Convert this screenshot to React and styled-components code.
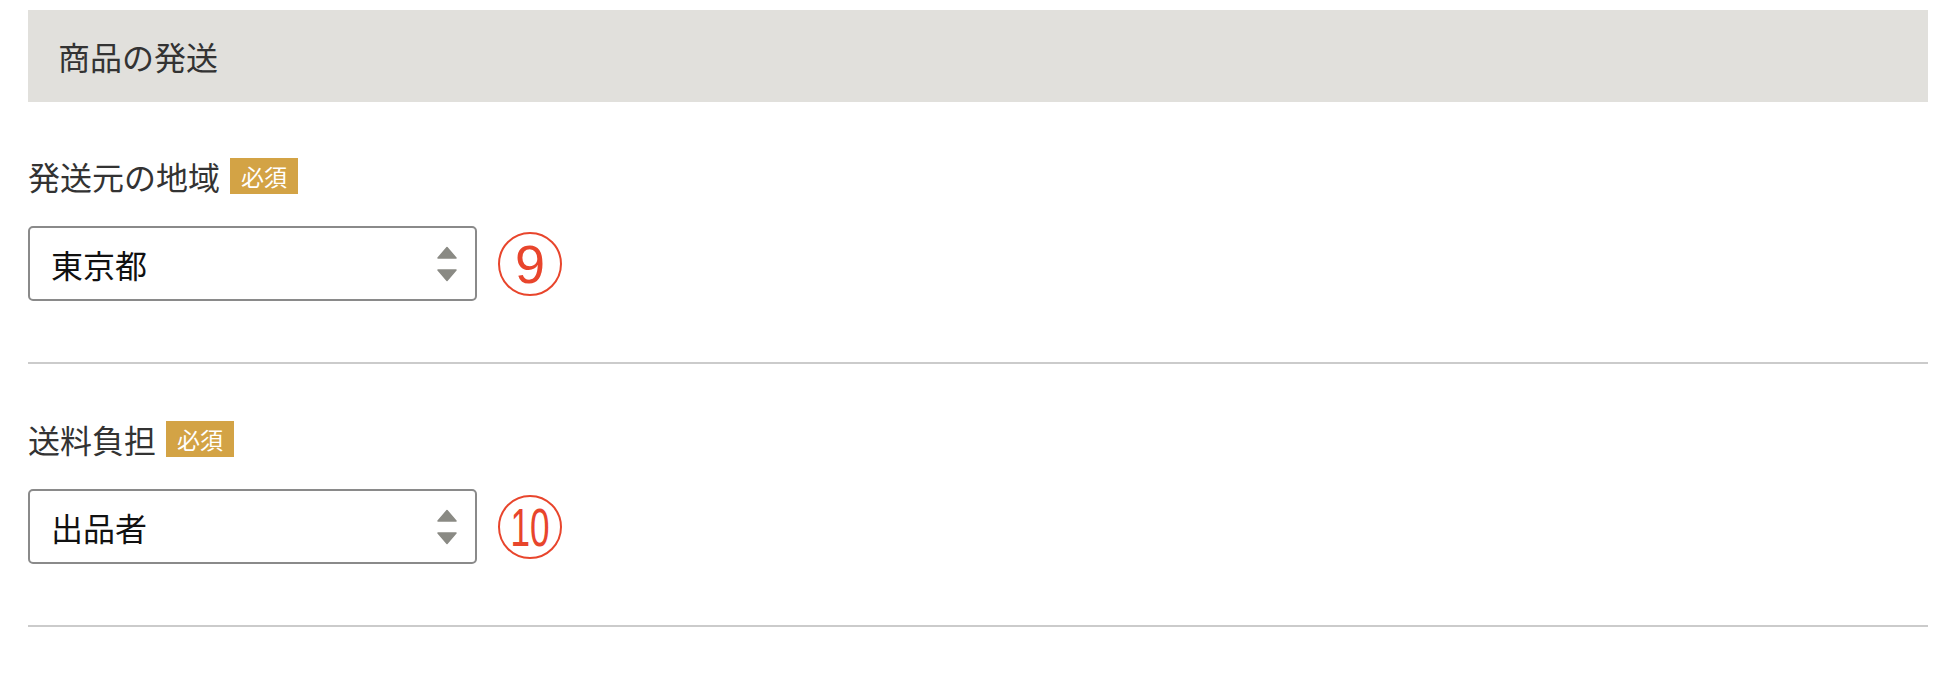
import styled, { createGlobalStyle } from "styled-components";

const GlobalStyle = createGlobalStyle`
  body {
    margin: 0;
    background: #fff;
    font-family: "Noto Sans CJK JP", "Noto Sans", sans-serif;
  }
`;

const Page = styled.div`
  padding: 10px 26px 0 28px;
`;

const SectionHead = styled.h2`
  height: 92px;
  margin: 0;
  padding-left: 30px;
  display: flex;
  align-items: center;
  background-color: #e1e0dc;
  color: #333;
  font-size: 32px;
  font-weight: 400;
`;

const Field = styled.div`
  padding: 51px 0 61px;
  border-bottom: 2px solid #cbcbcb;

  &:first-of-type {
    padding-top: 50px;
  }
`;

const LabelRow = styled.div`
  display: flex;
  align-items: center;
  height: 48px;
  margin-bottom: 26px;
`;

const Label = styled.label`
  color: #333;
  font-size: 32px;
  line-height: 48px;
`;

const Badge = styled.span`
  display: inline-flex;
  align-items: center;
  height: 36px;
  padding: 0 11px;
  margin-left: 10px;
  background-color: #d3a345;
  color: #fff;
  font-size: 23px;
`;

const InputRow = styled.div`
  display: flex;
  align-items: center;
  gap: 21px;
`;

const SelectWrap = styled.div`
  position: relative;
  width: 449px;
  height: 75px;
`;

const Select = styled.select`
  appearance: none;
  width: 100%;
  height: 100%;
  box-sizing: border-box;
  padding: 0 60px 0 21px;
  border: 2px solid #8a8a8a;
  border-radius: 5px;
  background: #fff;
  color: #111;
  font-family: "Noto Sans CJK JP", "Noto Sans", sans-serif;
  font-size: 32px;
  outline: none;
`;

const Arrows = styled.svg`
  position: absolute;
  right: 20px;
  top: 50%;
  transform: translateY(-50%);
  pointer-events: none;
`;

const Circled = styled.span`
  display: inline-flex;
  align-items: center;
  justify-content: center;
  width: 60px;
  height: 60px;
  border: 2px solid #e8452c;
  border-radius: 50%;
  color: #e8452c;
  font-family: "Liberation Sans", Arial, sans-serif;
  font-size: 54px;
  line-height: 1;
`;

const Digits = styled.span`
  display: inline-block;
  transform: scaleX(${(p) => (p.$narrow ? 0.65 : 1)});
  margin-top: 1px;
`;

const SelectArrows = () => (
  <Arrows width="20" height="36" viewBox="0 0 20 36">
    <polygon
      points="10,1.5 19,12 1,12"
      fill="#8a8a84"
      stroke="#8a8a84"
      strokeWidth="1.5"
      strokeLinejoin="round"
    />
    <polygon
      points="1,24 19,24 10,34.5"
      fill="#8a8a84"
      stroke="#8a8a84"
      strokeWidth="1.5"
      strokeLinejoin="round"
    />
  </Arrows>
);

const fields = [
  { id: "area", label: "発送元の地域", value: "東京都", options: ["東京都", "大阪府", "北海道"], num: "9" },
  { id: "fee", label: "送料負担", value: "出品者", options: ["出品者", "購入者"], num: "10" },
];

export default function App() {
  return (
    <>
      <GlobalStyle />
      <Page>
        <SectionHead>商品の発送</SectionHead>
        {fields.map((f) => (
          <Field key={f.id}>
            <LabelRow>
              <Label htmlFor={f.id}>{f.label}</Label>
              <Badge>必須</Badge>
            </LabelRow>
            <InputRow>
              <SelectWrap>
                <Select id={f.id} defaultValue={f.value}>
                  {f.options.map((o) => (
                    <option key={o}>{o}</option>
                  ))}
                </Select>
                <SelectArrows />
              </SelectWrap>
              <Circled>
                <Digits $narrow={f.num.length > 1}>{f.num}</Digits>
              </Circled>
            </InputRow>
          </Field>
        ))}
      </Page>
    </>
  );
}
